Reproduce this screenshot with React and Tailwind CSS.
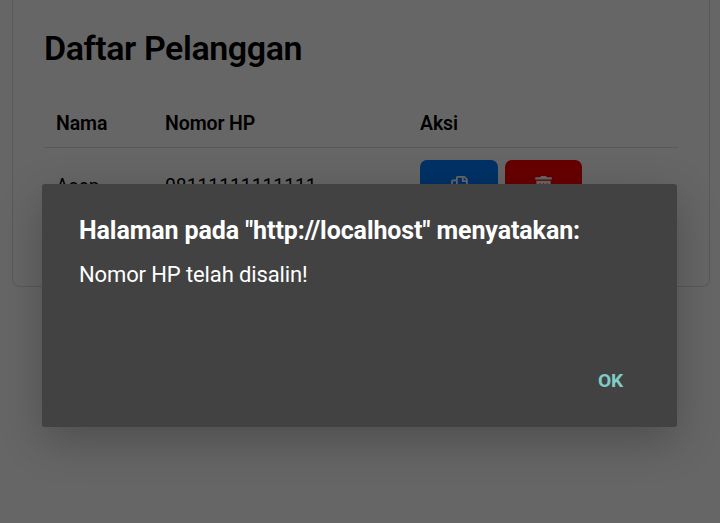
import { FaRegCopy, FaTrashAlt } from "react-icons/fa";

function CustomerRow({ name, phone }) {
  return (
    <tr className="h-[76px] border-b border-[#dedede] text-[19.3px]">
      <td className="pl-3 pt-[28px] align-top leading-[22px]">{name}</td>
      <td className="pl-3 pt-[28px] align-top leading-[22px]">{phone}</td>
      <td className="pl-3 pt-3 align-top">
        <div className="flex gap-[7px] text-white">
          <button className="flex h-[51px] w-[78px] items-center justify-center rounded-[7px] bg-[#007bff]">
            <FaRegCopy size={19} />
          </button>
          <button className="flex h-[51px] w-[77px] items-center justify-center rounded-[7px] bg-[#ff0000]">
            <FaTrashAlt size={19} />
          </button>
        </div>
      </td>
    </tr>
  );
}

function AlertDialog() {
  return (
    <div className="absolute left-[42px] top-[184px] flex h-[243px] w-[635px] flex-col rounded-[3px] bg-[#424242] px-[37px] pt-[32px] text-white shadow-[0_14px_44px_rgba(0,0,0,0.24)]">
      <h2 className="whitespace-nowrap text-[25px] font-bold leading-[30px] tracking-[-0.09px]">
        Halaman pada "http://localhost" menyatakan:
      </h2>
      <p className="mt-[15px] text-[22px] leading-[28px] tracking-[-0.12px]">Nomor HP telah disalin!</p>
      <button className="mr-[17px] mt-[81px] self-end text-[19.2px] font-bold leading-[22px] tracking-[-0.2px] text-[#80cbc4]">
        OK
      </button>
    </div>
  );
}

export default function App() {
  return (
    <div className="relative h-[523px] w-[720px] overflow-hidden bg-white font-['Roboto',sans-serif] text-black">
      <main className="ml-3 h-[287px] w-[698px] rounded-b-[8px] border border-t-0 border-[#dedede] pl-[31px] pt-[28px]">
        <h1 className="text-[34px] font-semibold leading-[40px] tracking-[-0.42px]">Daftar Pelanggan</h1>
        <table className="mt-[30px] w-[634px] table-fixed border-collapse text-left">
          <colgroup>
            <col className="w-[109px]" />
            <col className="w-[255px]" />
            <col />
          </colgroup>
          <thead>
            <tr className="h-[49px] border-b border-[#dedede] text-[19.5px] tracking-[-0.1px]">
              <th className="pl-3 pt-[3px] font-semibold">Nama</th>
              <th className="pl-3 pt-[3px] font-semibold">Nomor HP</th>
              <th className="pl-3 pt-[3px] font-semibold">Aksi</th>
            </tr>
          </thead>
          <tbody>
            <CustomerRow name="Asep" phone="08111111111111" />
          </tbody>
        </table>
      </main>
      <div className="absolute inset-0 bg-black/60" />
      <AlertDialog />
    </div>
  );
}
